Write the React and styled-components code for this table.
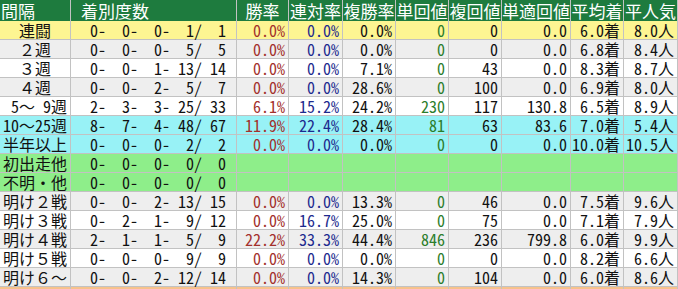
import React from 'react';
import styled, { createGlobalStyle } from 'styled-components';

const COLS = '71px 166px 52px 54px 53px 53px 53px 69px 53px 54px';
const LINE = '#c2c2c2';

const Global = createGlobalStyle`
  html, body { margin: 0; padding: 0; background: #fff; overflow: hidden; }
  body { font-family: "Noto Sans CJK JP", "Noto Sans", sans-serif; }
`;

const Table = styled.div`
  width: 678px;
  display: flex;
  flex-direction: column;
`;

const HeaderRow = styled.div`
  display: grid;
  grid-template-columns: ${COLS};
  height: 21px;
  background: #1e7b3e;
  color: #fff;
`;

const HeadCell = styled.div`
  box-sizing: border-box;
  border-right: 1px solid ${LINE};
  font-size: 17px;
  line-height: 21px;
  white-space: nowrap;
  text-align: ${(p) => p.$align || 'center'};
  padding-left: ${(p) => p.$pl || 0}px;
`;

const Row = styled.div`
  display: grid;
  grid-template-columns: ${COLS};
  height: 19px;
  box-sizing: border-box;
  border-bottom: 1px solid ${LINE};
  background: ${(p) => p.$bg};
`;

const Cell = styled.div`
  box-sizing: border-box;
  border-right: 1px solid ${LINE};
  font-size: 16px;
  line-height: 18px;
  white-space: pre;
  text-align: right;
  padding-right: 3px;
  color: ${(p) => p.$color || '#111'};
  font-feature-settings: "hwid" 1;
`;

const Label = styled(Cell)`
  text-align: center;
  padding: 0;
  font-feature-settings: normal;
`;

const Half = styled.span`
  display: inline-block;
  line-height: 18px;
  font-feature-settings: "hwid" 1;
`;

const Record = styled(Cell)`
  text-align: left;
  padding-left: 11px;
  padding-right: 0;
`;

const BG = {
  yellow: '#fdf592',
  grey: '#eeeeee',
  white: '#ffffff',
  cyan: '#98f2f6',
  green: '#8eee8a',
  peach: '#f7c28c',
};

const COLORS = ['#a3302c', '#1d2a8e', '#111', '#2b7d2b', '#111', '#111', '#111', '#111'];

const pad = (v, n) => String(v).padStart(n, ' ');
const rec = (r) =>
  r ? `${pad(r[0], 2)}-${pad(r[1], 3)}-${pad(r[2], 3)}-${pad(r[3], 3)}/${pad(r[4], 3)}` : '';

const rows = [
  ['連闘', [0, 0, 0, 1, 1], ['0.0%', '0.0%', '0.0%', '0', '0', '0.0', '6.0着', '8.0人'], 'yellow'],
  ['２週', [0, 0, 0, 5, 5], ['0.0%', '0.0%', '0.0%', '0', '0', '0.0', '6.8着', '8.4人'], 'grey'],
  ['３週', [0, 0, 1, 13, 14], ['0.0%', '0.0%', '7.1%', '0', '43', '0.0', '8.3着', '8.7人'], 'white'],
  ['４週', [0, 0, 2, 5, 7], ['0.0%', '0.0%', '28.6%', '0', '100', '0.0', '6.9着', '8.0人'], 'grey'],
  [' 5～ 9週', [2, 3, 3, 25, 33], ['6.1%', '15.2%', '24.2%', '230', '117', '130.8', '6.5着', '8.9人'], 'white'],
  ['10～25週', [8, 7, 4, 48, 67], ['11.9%', '22.4%', '28.4%', '81', '63', '83.6', '7.0着', '5.4人'], 'cyan'],
  ['半年以上', [0, 0, 0, 2, 2], ['0.0%', '0.0%', '0.0%', '0', '0', '0.0', '10.0着', '10.5人'], 'cyan'],
  ['初出走他', [0, 0, 0, 0, 0], ['', '', '', '', '', '', '', ''], 'green'],
  ['不明・他', [0, 0, 0, 0, 0], ['', '', '', '', '', '', '', ''], 'green'],
  ['明け２戦', [0, 0, 2, 13, 15], ['0.0%', '0.0%', '13.3%', '0', '46', '0.0', '7.5着', '9.6人'], 'grey'],
  ['明け３戦', [0, 2, 1, 9, 12], ['0.0%', '16.7%', '25.0%', '0', '75', '0.0', '7.1着', '7.9人'], 'white'],
  ['明け４戦', [2, 1, 1, 5, 9], ['22.2%', '33.3%', '44.4%', '846', '236', '799.8', '6.0着', '9.9人'], 'grey'],
  ['明け５戦', [0, 0, 0, 9, 9], ['0.0%', '0.0%', '0.0%', '0', '0', '0.0', '8.2着', '6.6人'], 'white'],
  ['明け６～', [0, 0, 2, 12, 14], ['0.0%', '0.0%', '14.3%', '0', '104', '0.0', '6.0着', '8.6人'], 'grey'],
  ['', null, ['', '', '', '', '', '', '', ''], 'peach'],
];

const heads = ['勝率', '連対率', '複勝率', '単回値', '複回値', '単適回値', '平均着', '平人気'];

const splitLabel = (s) =>
  s.split(/([ -~]+)/).filter(Boolean).map((part, i) =>
    /^[ -~]+$/.test(part) ? <Half key={i}>{part}</Half> : <React.Fragment key={i}>{part}</React.Fragment>
  );

export default function App() {
  return (
    <>
      <Global />
      <Table>
        <HeaderRow>
          <HeadCell $align="left" $pl={1}>間隔</HeadCell>
          <HeadCell $align="left" $pl={10}>着別度数</HeadCell>
          {heads.map((h) => (
            <HeadCell key={h}>{h}</HeadCell>
          ))}
        </HeaderRow>
        {rows.map(([label, r, vals, bg], i) => (
          <Row key={i} $bg={BG[bg]}>
            <Label>{splitLabel(label)}</Label>
            <Record>{rec(r)}</Record>
            {vals.map((v, j) => (
              <Cell key={j} $color={COLORS[j]}>{v}</Cell>
            ))}
          </Row>
        ))}
      </Table>
    </>
  );
}
